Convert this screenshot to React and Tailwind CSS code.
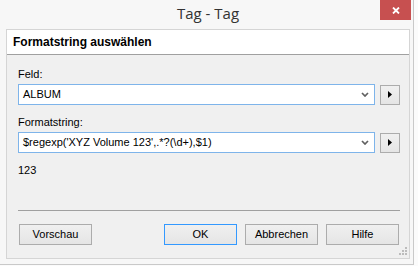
import React from "react";

function Combo({ value }) {
  return (
    <div className="mt-[3px] flex h-[21px] items-center gap-[5px]">
      <div className="flex h-[21px] flex-1 items-center justify-between border border-[#7eb4ea] bg-white pl-[4px] pr-[5px]">
        <span className="leading-[13px] whitespace-pre">{value}</span>
        <svg width="8" height="5" viewBox="0 0 8 5">
          <polyline points="1,1 4,4 7,1" fill="none" stroke="#606060" strokeWidth="1.7" />
        </svg>
      </div>
      <div className="flex h-[20px] w-[20px] items-center justify-center border border-[#acacac] bg-gradient-to-b from-[#f0f0f0] to-[#e5e5e5]">
        <svg width="4" height="7" viewBox="0 0 4 7">
          <polygon points="0,0 4,3.5 0,7" fill="#000" />
        </svg>
      </div>
    </div>
  );
}

function Btn({ children, def }) {
  return (
    <div
      className={
        "flex h-[21px] w-[73px] items-center justify-center bg-gradient-to-b from-[#f0f0f0] to-[#e5e5e5] border leading-[13px] " +
        (def ? "border-[#3399ff]" : "border-[#acacac]")
      }
    >
      {children}
    </div>
  );
}

export default function App() {
  return (
    <div className="h-[266px] w-[418px] overflow-hidden bg-[#fbfbfb] font-['Liberation_Sans',Arial,sans-serif] text-[11px] text-black">
      <div className="flex h-[265px] w-[414px] flex-col border-b border-r border-[#c9c9c9] bg-[#f7f7f7]">
        <div className="relative flex h-[29px] justify-center pl-[3px]">
          <span className="pt-[3px] font-['Open_Sans',sans-serif] text-[15px] leading-[20px] text-[#333]">
            Tag - Tag
          </span>
          <div className="absolute right-[2px] top-0 flex h-[20px] w-[31px] items-center justify-center bg-[#c75050]">
            <svg width="8" height="7" viewBox="0 0 8 7">
              <path d="M1 0.5 L7 6.5 M7 0.5 L1 6.5" stroke="#fff" strokeWidth="1.8" />
            </svg>
          </div>
        </div>
        <div className="relative ml-[6px] flex h-[230px] w-[404px] flex-col border border-[#d5d5d5] bg-[#f0f0f0]">
          <div className="flex h-[25px] items-center border-b border-[#a0a0a0] bg-white pl-[6px] text-[12px] font-bold leading-[14px]">
            Formatstring auswählen
          </div>
          <div className="flex flex-col pl-[11px] pr-[9px] pt-[13px]">
            <div className="h-[13px] leading-[13px]">Feld:</div>
            <Combo value="ALBUM" />
            <div className="mt-[11px] h-[13px] leading-[13px]">Formatstring:</div>
            <Combo value={"$regexp('XYZ Volume 123',.*?(\\d+),$1)"} />
            <div className="mt-[11px] h-[13px] leading-[13px]">123</div>
            <div className="mt-[33px] h-px bg-[#a0a0a0]" />
            <div className="mt-[13px] flex px-[1px]">
              <Btn>Vorschau</Btn>
              <div className="flex-1" />
              <div className="flex gap-[8px]">
                <Btn def>OK</Btn>
                <Btn>Abbrechen</Btn>
                <Btn>Hilfe</Btn>
              </div>
            </div>
          </div>
          <svg className="absolute bottom-[3px] right-[2px]" width="8" height="8" viewBox="0 0 8 8">
            <rect x="6" y="0" width="2" height="2" fill="#bcbcbc" />
            <rect x="3" y="3" width="2" height="2" fill="#bcbcbc" />
            <rect x="6" y="3" width="2" height="2" fill="#bcbcbc" />
            <rect x="0" y="6" width="2" height="2" fill="#bcbcbc" />
            <rect x="3" y="6" width="2" height="2" fill="#bcbcbc" />
            <rect x="6" y="6" width="2" height="2" fill="#bcbcbc" />
          </svg>
        </div>
      </div>
    </div>
  );
}
